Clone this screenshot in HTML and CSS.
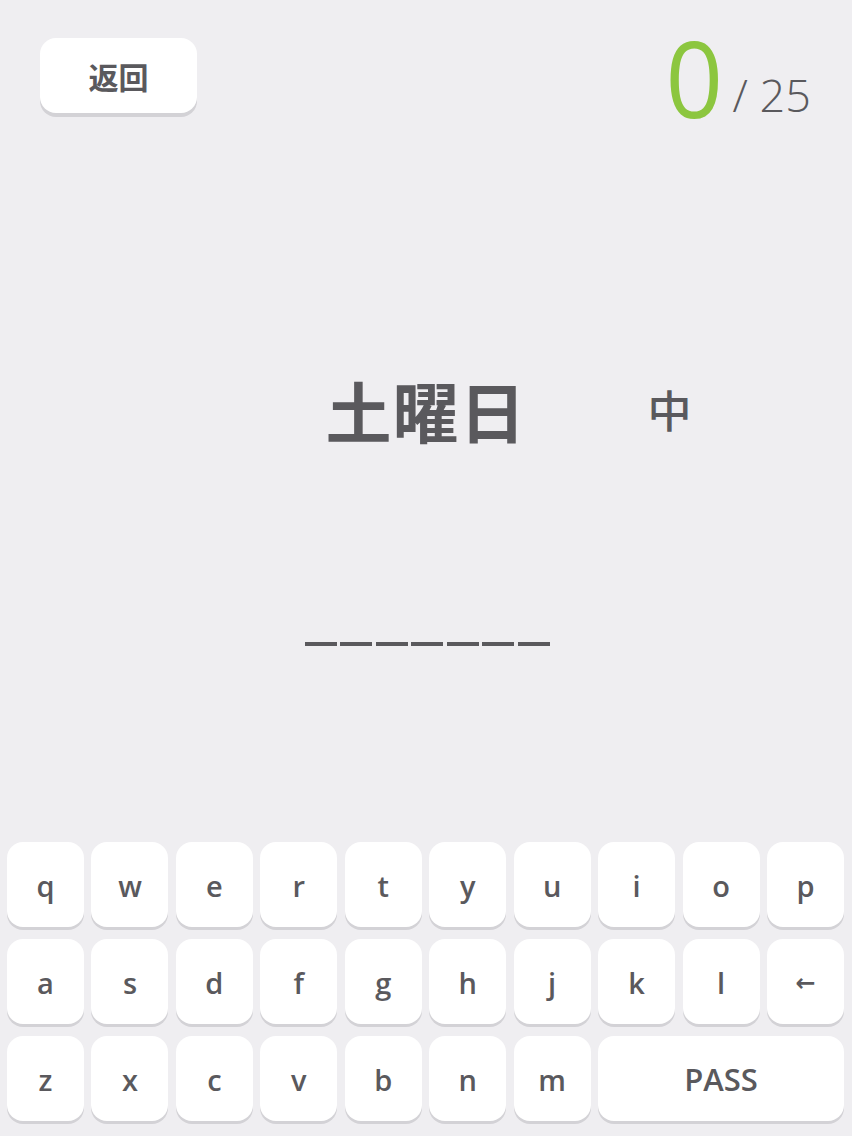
FILE: index.html
```html
<!DOCTYPE html>
<html lang="ja">
<head>
<meta charset="utf-8">
<title>単語クイズ</title>
<link rel="stylesheet" href="styles.css">
</head>
<body>
<div class="app">
  <header class="top">
    <button class="back" type="button">返回</button>
    <div class="score"><span class="count">0</span><span class="total">/ 25</span></div>
  </header>
  <main class="stage">
    <div class="word-row">
      <span class="spacer"></span>
      <h1 class="word">土曜日</h1>
      <span class="lang">中</span>
    </div>
    <div class="slots">
      <span class="slot"></span><span class="slot"></span><span class="slot"></span><span class="slot"></span><span class="slot"></span><span class="slot"></span><span class="slot"></span>
    </div>
  </main>
  <div class="keyboard">
    <button class="key">q</button><button class="key">w</button><button class="key">e</button><button class="key">r</button><button class="key">t</button><button class="key">y</button><button class="key">u</button><button class="key">i</button><button class="key">o</button><button class="key">p</button>
    <button class="key">a</button><button class="key">s</button><button class="key">d</button><button class="key">f</button><button class="key">g</button><button class="key">h</button><button class="key">j</button><button class="key">k</button><button class="key">l</button><button class="key key-back">←</button>
    <button class="key">z</button><button class="key">x</button><button class="key">c</button><button class="key">v</button><button class="key">b</button><button class="key">n</button><button class="key">m</button><button class="key key-pass">PASS</button>
  </div>
</div>
</body>
</html>
```

FILE: styles.css
```css
* { box-sizing: border-box; }

html, body {
  margin: 0;
  padding: 0;
  background: #efeef1;
}

body {
  font-family: "Open Sans", "Noto Sans", "Noto Sans CJK JP", sans-serif;
  color: #5a595d;
}

.app {
  height: 1136px;
  display: flex;
  flex-direction: column;
}

.top {
  display: flex;
  justify-content: space-between;
  align-items: flex-start;
  padding: 24px 41px 0 40px;
  height: 120px;
}

.back {
  margin-top: 14px;
  width: 157px;
  height: 75px;
  border: none;
  border-radius: 16px;
  background: #ffffff;
  box-shadow: 0 4px 0 #d3d2d6;
  font-family: "Noto Sans CJK JP", "Noto Sans CJK SC", sans-serif;
  font-weight: 700;
  font-size: 30px;
  color: #5a595d;
  padding: 0;
  line-height: 1;
}

.score {
  line-height: 1;
  white-space: nowrap;
}

.count {
  display: inline-block;
  font-family: "Open Sans", "Noto Sans", sans-serif;
  font-weight: 500;
  font-size: 106px;
  color: #8cc63f;
  transform: scaleX(0.95);
}

.total {
  font-family: "Open Sans", "Noto Sans", sans-serif;
  font-weight: 300;
  font-size: 45px;
  color: #5a595d;
  margin-left: 8px;
  vertical-align: 6px;
}

.stage {
  flex: 1;
  display: flex;
  flex-direction: column;
}

.word-row {
  margin-top: 256px;
  display: grid;
  grid-template-columns: 1fr auto 1fr;
  align-items: center;
}

.word {
  margin: 0;
  font-family: "Noto Sans CJK JP", "Noto Sans CJK SC", sans-serif;
  font-weight: 700;
  font-size: 66px;
  line-height: 1;
  color: #5a595d;
  letter-spacing: 1px;
}

.lang {
  justify-self: start;
  margin-left: 121px;
  font-family: "Noto Sans CJK JP", "Noto Sans CJK SC", sans-serif;
  font-weight: 500;
  font-size: 44px;
  line-height: 1;
  color: #5a595d;
}

.slots {
  margin-top: 200px;
  display: flex;
  justify-content: center;
  gap: 3.5px;
  padding-left: 2px;
}

.slot {
  width: 32px;
  height: 4px;
  background: #5a595d;
}

.keyboard {
  display: grid;
  grid-template-columns: repeat(10, 1fr);
  grid-auto-rows: 85px;
  column-gap: 7.4px;
  row-gap: 12px;
  padding: 0 8px 15px 7px;
}

.key {
  border: none;
  border-radius: 16px;
  background: #ffffff;
  box-shadow: 0 3px 0 #d3d2d6;
  font-family: "Open Sans", "Noto Sans", sans-serif;
  font-weight: 600;
  font-size: 29px;
  color: #5a595d;
  padding: 2px 0 0 0;
  line-height: 1;
}

.key-back {
  font-family: "DejaVu Sans", sans-serif;
  font-weight: 700;
  font-size: 24px;
}

.key-pass {
  grid-column: span 3;
  font-size: 31px;
}
```
